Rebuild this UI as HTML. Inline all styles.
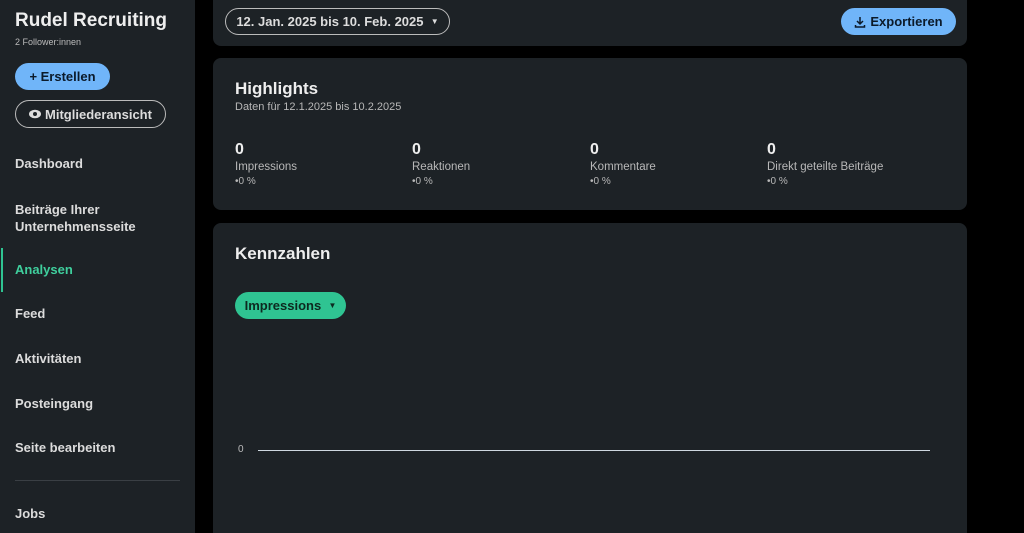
<!DOCTYPE html>
<html><head><style>
*{margin:0;padding:0;box-sizing:border-box}
html,body{width:1024px;height:533px;overflow:hidden}
body{background:#000;font-family:"Liberation Sans",sans-serif;color:#e9e9e9;position:relative}
.sb{position:absolute;left:0;top:0;width:195px;height:533px;background:#1d2226}
.card{position:absolute;left:213px;width:754px;background:#1d2226;border-radius:8px}
.abs{position:absolute;white-space:nowrap}
.nav{position:absolute;left:15px;font-size:13px;font-weight:bold;color:#dcdcdc}
.btn{position:absolute;border-radius:14px;font-size:13px;font-weight:bold;display:flex;align-items:center;justify-content:center}
.num{font-size:16px;font-weight:bold;color:#eee}
.lbl{font-size:11.5px;color:#b8b8b8;margin-top:2px}
.pct{font-size:10px;color:#b8b8b8;margin-top:3px}
</style></head><body>
<div class="sb">
<div class="abs" style="left:15px;top:10px;font-size:19px;font-weight:bold;color:#eee">Rudel Recruiting</div>
<div class="abs" style="left:15px;top:37px;font-size:9px;color:#bbb">2 Follower:innen</div>
<div class="btn" style="left:15px;top:63px;width:95px;height:27px;background:#70b5f9;color:#0b1a2a">+ Erstellen</div>
<div class="btn" style="left:15px;top:100px;width:151px;height:28px;border:1px solid #bbb;color:#ddd">
<svg width="12" height="10" viewBox="0 0 12 10" style="margin-right:4px"><ellipse cx="6" cy="5" rx="6" ry="4.3" fill="#ddd"/><circle cx="6" cy="5" r="2" fill="#1d2226"/></svg>Mitgliederansicht</div>
<div class="nav" style="top:156px">Dashboard</div>
<div class="nav" style="top:201px;line-height:17px">Beiträge Ihrer<br>Unternehmensseite</div>
<div style="position:absolute;left:1px;top:248px;width:2px;height:44px;background:#2fc492"></div>
<div class="nav" style="top:262px;color:#3fcf9d">Analysen</div>
<div class="nav" style="top:306px">Feed</div>
<div class="nav" style="top:351px">Aktivitäten</div>
<div class="nav" style="top:396px">Posteingang</div>
<div class="nav" style="top:440px">Seite bearbeiten</div>
<div style="position:absolute;left:15px;top:480px;width:165px;height:1px;background:#3a3f44"></div>
<div class="nav" style="top:506px">Jobs</div>
</div>
<div class="card" style="top:-10px;height:56px">
<div class="btn" style="left:12px;top:18px;width:225px;height:27px;border:1px solid #bbb;color:#ddd">12. Jan. 2025 bis 10. Feb. 2025 &nbsp;<span style="font-size:8px">▼</span></div>
<div class="btn" style="left:628px;top:18px;width:115px;height:27px;background:#70b5f9;color:#0b1a2a">
<svg width="12" height="12" viewBox="0 0 12 12" style="margin-right:4px"><path d="M6 1v7M3 5l3 3 3-3M1.5 9v2h9V9" stroke="#0b1a2a" stroke-width="1.5" fill="none"/></svg>Exportieren</div>
</div>
<div class="card" style="top:58px;height:152px">
<div class="abs" style="left:22px;top:21px;font-size:17px;font-weight:bold;color:#eee">Highlights</div>
<div class="abs" style="left:22px;top:43px;font-size:11px;color:#b8b8b8">Daten für 12.1.2025 bis 10.2.2025</div>
<div class="abs" style="left:22px;top:83px"><div class="num">0</div><div class="lbl">Impressions</div><div class="pct">•0 %</div></div>
<div class="abs" style="left:199px;top:83px"><div class="num">0</div><div class="lbl">Reaktionen</div><div class="pct">•0 %</div></div>
<div class="abs" style="left:377px;top:83px"><div class="num">0</div><div class="lbl">Kommentare</div><div class="pct">•0 %</div></div>
<div class="abs" style="left:554px;top:83px"><div class="num">0</div><div class="lbl">Direkt geteilte Beiträge</div><div class="pct">•0 %</div></div>
</div>
<div class="card" style="top:223px;height:310px;border-radius:8px 8px 0 0">
<div class="abs" style="left:22px;top:21px;font-size:17px;font-weight:bold;color:#eee">Kennzahlen</div>
<div class="btn" style="left:22px;top:69px;width:111px;height:27px;background:#2fc492;color:#0d2a20">Impressions &nbsp;<span style="font-size:8px">▼</span></div>
<div class="abs" style="left:25px;top:221px;font-size:10px;color:#bbb">0</div>
<div style="position:absolute;left:45px;top:227px;width:672px;height:1px;background:#cfd8e0"></div>
</div>
</body></html>
